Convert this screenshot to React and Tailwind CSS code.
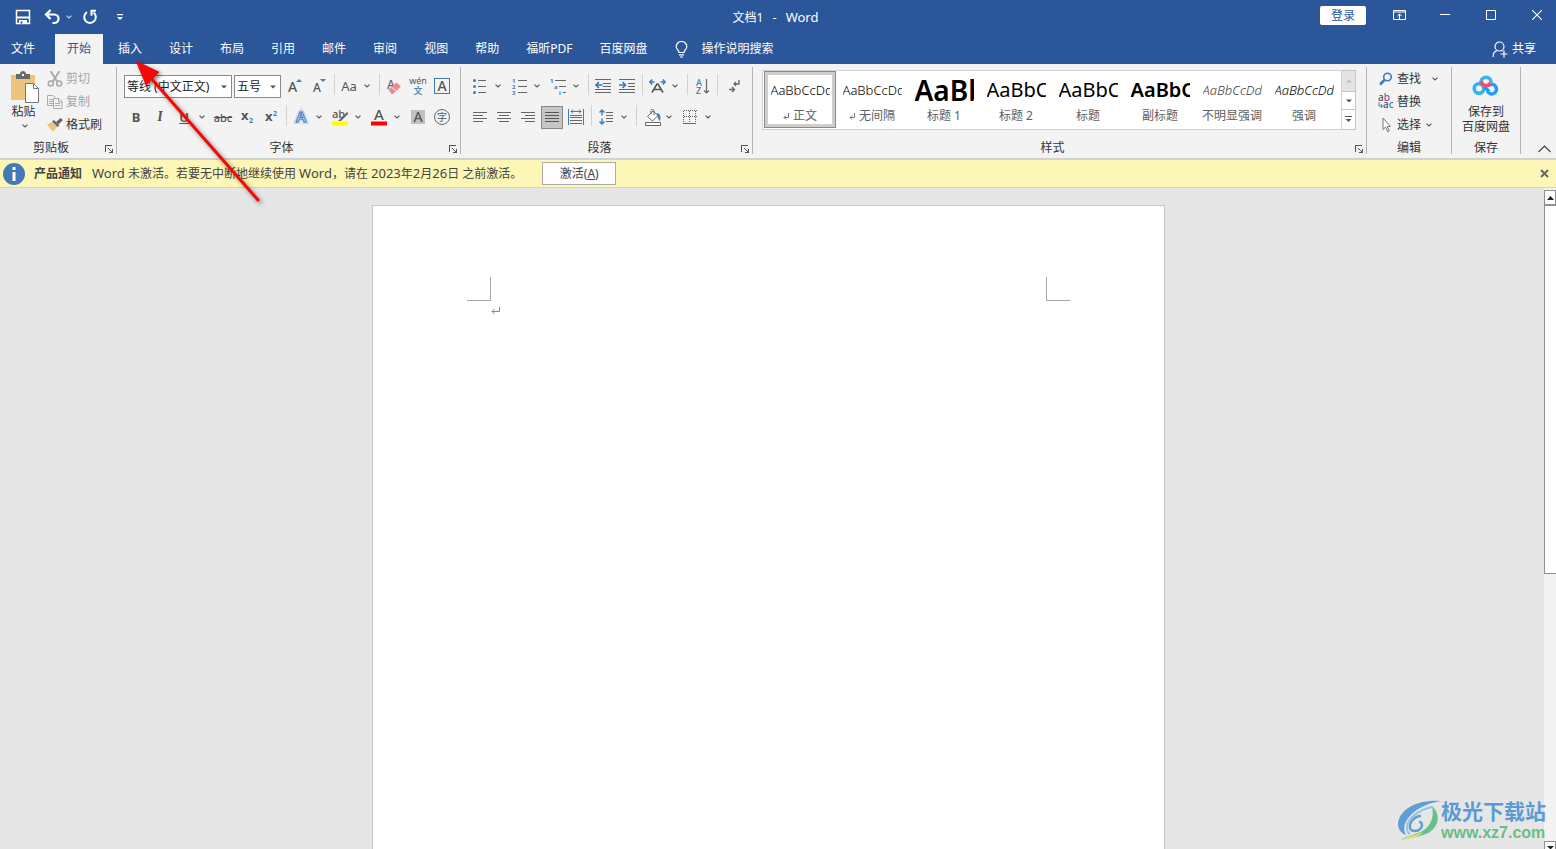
import { useState } from "react";

const BLUE = "#3f7ab6";
const GRAY = "#666666";

const tabs = ["开始", "插入", "设计", "布局", "引用", "邮件", "审阅", "视图", "帮助", "福昕PDF", "百度网盘"];

const styleItems = [
  { name: "正文", mark: true, sample: "AaBbCcDd", cls: "text-[13px] font-light text-black" },
  { name: "无间隔", mark: true, sample: "AaBbCcDd", cls: "text-[13px] font-light text-black" },
  { name: "标题 1", sample: "AaBb", cls: "text-[28px] font-semibold text-black" },
  { name: "标题 2", sample: "AaBbCc", cls: "text-[20px] text-black" },
  { name: "标题", sample: "AaBbCc", cls: "text-[20px] text-black" },
  { name: "副标题", sample: "AaBbCc", cls: "text-[20px] font-semibold text-black" },
  { name: "不明显强调", sample: "AaBbCcDd", cls: "text-[13px] font-light italic text-[#404040]" },
  { name: "强调", sample: "AaBbCcDd", cls: "text-[13px] font-light italic text-black" },
];

/* ---------- small building blocks ---------- */

function Chevron({ color = "#555" }) {
  return (
    <svg width="6" height="4" viewBox="0 0 6 4" fill="none" stroke={color} strokeWidth="1.1">
      <path d="M.5 .7 3 3 5.500 .7" />
    </svg>
  );
}

function Triangle({ color = "#555" }) {
  return (
    <svg width="6" height="4" viewBox="0 0 6 4" fill={color}>
      <path d="M0 .5h6L3 3.500z" />
    </svg>
  );
}

function Btn({ label, className = "", children }) {
  return (
    <button
      aria-label={label}
      className={`flex h-6 w-6 shrink-0 items-center justify-center leading-none ${className}`}
    >
      {children}
    </button>
  );
}

function Drop({ label }) {
  return (
    <button aria-label={label} className="flex h-6 w-[15px] shrink-0 items-center justify-center pr-[3px]">
      <Chevron />
    </button>
  );
}

function Sep() {
  return (
    <span className="flex h-6 w-[6px] shrink-0 justify-center">
      <span className="h-[21px] w-px bg-[#d2d2d2]" />
    </span>
  );
}

function Group({ title, launcher, className = "", children }) {
  return (
    <section className={`flex flex-col border-r border-[#b5b5b5] ${className}`}>
      <div className="h-[71px] shrink-0">{children}</div>
      <div className="flex h-4 shrink-0 items-center">
        <span className="flex-1 pt-[3px] text-center leading-4">{title}</span>
        {launcher && (
          <button aria-label={`${title}设置`} className="flex w-[14px] justify-center pt-[6px]">
            <svg width="8" height="8" viewBox="0 0 8 8" fill="none" stroke="#555" shapeRendering="crispEdges">
              <path d="M.5 7V.5H7M3 3l4 4M7.500 3.500v4h-4" />
            </svg>
          </button>
        )}
      </div>
    </section>
  );
}

function Combo({ label, value, className }) {
  return (
    <span className={`relative flex h-[23px] shrink-0 border border-[#8a8a8a] bg-white ${className}`}>
      <select aria-label={label} className="w-full appearance-none bg-white pl-[2px] pt-px text-xs text-[#222] outline-none">
        <option>{value}</option>
      </select>
      <span className="pointer-events-none absolute right-1 top-[9px]">
        <Triangle />
      </span>
    </span>
  );
}

function Lines({ rows, color = GRAY }) {
  return (
    <svg width="16" height="12" viewBox="0 0 16 12" stroke={color} shapeRendering="crispEdges">
      {rows.map(([x1, x2], i) => (
        <path key={i} d={`M${x1} ${i * 3 + 1.5}H${x2}`} />
      ))}
    </svg>
  );
}

/* ---------- title bar and tabs ---------- */

function TitleBar() {
  return (
    <header className="flex h-[34px] bg-[#2b579a] text-white">
      <div className="flex flex-1 items-center pl-[15px]">
        <button aria-label="保存">
          <svg width="16" height="16" viewBox="0 0 16 16" fill="none" stroke="#fff" strokeWidth="1.500">
            <path d="M1.500 1.500h13v13h-13z" />
            <path d="M1.500 8.500h13" strokeWidth="2" />
            <path d="M4 15v-4h8v4z" fill="#fff" stroke="none" />
            <path d="M5.500 12.500h2v2h-2z" fill="#2b579a" stroke="none" />
          </svg>
        </button>
        <button aria-label="撤消" className="ml-[13px]">
          <svg width="16" height="16" viewBox="0 0 16 16" fill="none" stroke="#fff" strokeWidth="2.200">
            <path d="M6.500 1 2 5.500 6.500 10M2.500 5.500H10c6 0 6 8.500 0 8.500H8.500" />
          </svg>
        </button>
        <button aria-label="撤消选项" className="ml-[6px]">
          <Chevron color="#c9d6ea" />
        </button>
        <button aria-label="重复" className="ml-[10px]">
          <svg width="16" height="16" viewBox="0 0 16 16" fill="none" stroke="#fff" strokeWidth="2">
            <path d="M5 3.200A5.800 5.800 0 1 0 11.500 3.500" />
            <path d="M14 1.800H9.500v5" />
          </svg>
        </button>
        <button aria-label="自定义快速访问工具栏" className="ml-[19px]">
          <svg width="6" height="7" viewBox="0 0 6 7" fill="#fff">
            <path d="M0 0h6v1.200H0zM0 3h6L3 6z" />
          </svg>
        </button>
      </div>
      <h1 className="pr-5 pt-[9px] text-[13px] leading-4">
        <span className="text-xs">文档1</span>
        <span className="mx-[9px]">-</span>
        <span>Word</span>
      </h1>
      <div className="flex flex-1 items-start justify-end gap-2">
        <button className="mt-[6px] mr-[6px] h-[19px] w-[46px] rounded-xs bg-white text-xs leading-5 text-[#2b579a]">
          登录
        </button>
        <button aria-label="功能区显示选项" className="flex h-[30px] w-[38px] items-center justify-center">
          <svg width="13" height="10" viewBox="0 0 13 10" fill="none" stroke="#fff">
            <path d="M.5 .5h12v9H.5zM.5 2h12M6.500 9V4M4.300 6.200 6.500 4l2.200 2.200" />
          </svg>
        </button>
        <button aria-label="最小化" className="flex h-[29px] w-[38px] items-center justify-center">
          <span className="h-px w-[10px] bg-white" />
        </button>
        <button aria-label="最大化" className="flex h-[30px] w-[38px] items-center justify-center">
          <span className="h-[10px] w-[10px] border border-white" />
        </button>
        <button aria-label="关闭" className="flex h-[30px] w-[38px] items-center justify-center">
          <svg width="10" height="10" viewBox="0 0 10 10" stroke="#fff" strokeWidth="1.100">
            <path d="M0 0l10 10M10 0L0 10" />
          </svg>
        </button>
      </div>
    </header>
  );
}

function TabBar({ active, setActive }) {
  return (
    <nav className="flex h-[30px] bg-[#2b579a] text-white">
      <button className="mr-[9px] px-[11px]">文件</button>
      <div className="flex gap-[3px]">
        {tabs.map((t) => (
          <button
            key={t}
            onClick={() => setActive(t)}
            className={`px-3 ${active === t ? "bg-[#f3f3f3] text-[#2b579a]" : ""}`}
          >
            {t}
          </button>
        ))}
      </div>
      <button className="ml-4 flex items-center gap-[13px]">
        <svg width="13" height="17" viewBox="0 0 13 17" fill="none" stroke="#fff" strokeWidth="1.200">
          <path d="M4 11.500C4 9 1.200 8.500 1.200 5.500a5.300 5 0 0 1 10.600 0c0 3-2.800 3.500-2.800 6zM4 13.800h5M5 16h3" />
        </svg>
        操作说明搜索
      </button>
      <button className="ml-auto flex items-center gap-1 pr-5">
        <svg width="16" height="17" viewBox="0 0 16 17" fill="none" stroke="#fff" strokeWidth="1.200">
          <circle cx="7.500" cy="5.500" r="4.500" />
          <path d="M1 16c0-3.500 2-6 4.500-6.500M9.500 9.500l1 .7M12 9.500v7M8.500 13H15.500" />
        </svg>
        共享
      </button>
    </nav>
  );
}

/* ---------- ribbon groups ---------- */

function ClipboardGroup() {
  return (
    <Group title="剪贴板" launcher className="w-[117px]">
      <div className="flex">
        <button className="flex w-[47px] flex-col items-center pt-1">
          <svg width="30" height="33" viewBox="0 0 30 33" className="ml-[3px]">
            <path d="M1 4h24v25H1z" fill="#ecc47c" />
            <path d="M6 3h4c0-4 6-4 6 0h4v5H6z" fill="#6a6a6a" />
            <path d="M12 3h2v2h-2z" fill="#fff" />
            <path d="M15.500 12.500h8l5 5v14h-13z" fill="#fff" stroke="#777" />
            <path d="M23.500 12.500v5h5" fill="none" stroke="#777" />
          </svg>
          <span className="leading-4">粘贴</span>
          <span className="flex h-3 items-center pl-[3px]">
            <Chevron />
          </span>
        </button>
        <div className="flex flex-col">
          <button className="flex h-[23px] items-center gap-[3px] text-[#a6a6a6]">
            <svg width="16" height="16" viewBox="0 0 16 16" fill="none" stroke="#ababab" strokeWidth="1.600">
              <path d="M3.500 0 10.500 11M12.500 0 5.500 11" strokeWidth="2" />
              <circle cx="3.800" cy="12.500" r="2.500" />
              <circle cx="12.200" cy="12.500" r="2.500" />
            </svg>
            剪切
          </button>
          <button className="flex h-[23px] items-center gap-[3px] text-[#a6a6a6]">
            <svg width="16" height="14" viewBox="0 0 16 14" fill="#f3f3f3" stroke="#ababab">
              <path d="M.5 .5H6l3 3v7H.5zM2 4.500h4M2 6.500h4M2 8.500h4" />
              <path d="M6.500 3.500H12l3 3v7H6.500zM8 8.500h5M8 10.500h5M11.500 4v3H15" />
            </svg>
            复制
          </button>
          <button className="flex h-[23px] items-center gap-[3px]">
            <svg width="16" height="14" viewBox="0 0 16 14">
              <path d="M0 6.500 5 4l5 5-4 5z" fill="#ecc47c" />
              <path d="M5 3.500 7 2l5.500 5.500-2 1.500z" fill="#666" />
              <path d="M9 4 13.500 0 16 2l-4.500 4.500z" fill="#666" />
            </svg>
            格式刷
          </button>
        </div>
      </div>
    </Group>
  );
}

function FontGroup() {
  return (
    <Group title="字体" launcher className="w-[344px]">
      <div className="flex flex-col gap-[7px] pl-[7px] pt-[7px] font-semibold text-[#555]">
        <div className="flex items-center font-normal">
          <Combo label="字体" value="等线 (中文正文)" className="mr-[2px] w-[108px]" />
          <Combo label="字号" value="五号" className="mr-[2px] w-[47px]" />
          <Btn label="增大字号">
            <svg width="16" height="16" viewBox="0 0 16 16" className="overflow-visible">
              <text x="1" y="14" fontSize="14" fontWeight="500" fill="#555">A</text>
              <path d="M9 4h6l-3-3z" fill={BLUE} />
            </svg>
          </Btn>
          <Btn label="减小字号">
            <svg width="16" height="16" viewBox="0 0 16 16" className="overflow-visible">
              <text x="2" y="14" fontSize="12" fontWeight="500" fill="#555">A</text>
              <path d="M9 1h6l-3 3z" fill={BLUE} />
            </svg>
          </Btn>
          <Sep />
          <Btn label="更改大小写" className="text-[13px]">Aa</Btn>
          <Drop label="大小写选项" />
          <Sep />
          <Btn label="清除所有格式">
            <svg width="16" height="17" viewBox="0 0 16 17" className="overflow-visible">
              <text x="1" y="11" fontSize="12" fontWeight="500" fill="#666">A</text>
              <path d="M2.500 11.500 10.500 4.500l4.500 4-8 7.500H5.500z" fill="#e98a99" />
              <path d="M5.500 9l4.500 4" stroke="#f3f3f3" />
            </svg>
          </Btn>
          <Btn label="拼音指南">
            <svg width="18" height="18" viewBox="0 0 18 18" textAnchor="middle" className="overflow-visible">
              <text x="9" y="7" fontSize="9" fill="#555">wén</text>
              <text x="9" y="17" fontSize="9" fontWeight="500" fill={BLUE}>文</text>
            </svg>
          </Btn>
          <Btn label="字符边框">
            <span className="flex h-4 w-4 items-center justify-center border border-[#3f7ab6] text-[14px] font-medium">A</span>
          </Btn>
        </div>
        <div className="flex items-center">
          <Btn label="加粗" className="text-[13px] font-bold">B</Btn>
          <Btn label="倾斜" className="font-serif text-[14px] italic">I</Btn>
          <Btn label="下划线" className="text-[13px] underline">U</Btn>
          <Drop label="下划线选项" />
          <Btn label="删除线" className="text-[11px] font-medium line-through">abc</Btn>
          <Btn label="下标">
            <svg width="14" height="14" viewBox="0 0 14 14" fontWeight="700" className="overflow-visible">
              <text x="1" y="10" fontSize="13" fill="#555">x</text>
              <text x="9" y="13" fontSize="7" fill={BLUE}>2</text>
            </svg>
          </Btn>
          <Btn label="上标">
            <svg width="14" height="14" viewBox="0 0 14 14" fontWeight="700" className="overflow-visible">
              <text x="1" y="11" fontSize="13" fill="#555">x</text>
              <text x="9" y="6" fontSize="7" fill={BLUE}>2</text>
            </svg>
          </Btn>
          <Sep />
          <Btn label="文本效果">
            <svg width="16" height="16" viewBox="0 0 16 16" className="overflow-visible">
              <text x="3" y="13" fontSize="15" fontWeight="600" fill="#fff" stroke="#c3daf2" strokeWidth="4">A</text>
              <text x="3" y="13" fontSize="15" fontWeight="600" fill="#fff" stroke={BLUE}>A</text>
            </svg>
          </Btn>
          <Drop label="文本效果选项" />
          <Btn label="突出显示">
            <svg width="17" height="17" viewBox="0 0 17 17" className="overflow-visible">
              <text x="0" y="9" fontSize="11" fontWeight="500" fill="#555">ab</text>
              <path d="M6 12 15 3l1.500 1.500L9 12z" fill="#666" />
              <path d="M0 12.500h16v4H0z" fill="#ffff00" />
            </svg>
          </Btn>
          <Drop label="突出显示颜色" />
          <Btn label="字体颜色">
            <svg width="16" height="17" viewBox="0 0 16 17" className="overflow-visible">
              <text x="3" y="11" fontSize="15" fontWeight="500" fill="#555">A</text>
              <path d="M0 12.500h16v4H0z" fill="#ff0000" />
            </svg>
          </Btn>
          <Drop label="字体颜色选项" />
          <Btn label="字符底纹">
            <span className="flex h-[14px] w-[14px] items-center justify-center bg-[#c0c0c0] text-[14px] font-medium">A</span>
          </Btn>
          <Btn label="带圈字符">
            <span className="flex h-4 w-4 items-center justify-center rounded-full border border-[#666] text-[10px] font-normal">字</span>
          </Btn>
        </div>
      </div>
    </Group>
  );
}

function ParagraphGroup() {
  return (
    <Group title="段落" launcher className="w-[292px]">
      <div className="flex flex-col gap-[7px] pl-[7px] pt-[7px]">
        <div className="flex items-center">
          <Btn label="项目符号">
            <svg width="14" height="16" viewBox="0 0 14 16" fill={BLUE} stroke={GRAY}>
              <path d="M5 2.500h8M5 8.500h8M5 14.500h8" />
              <g stroke="none">
                <circle cx="1.500" cy="2.500" r="1.500" />
                <circle cx="1.500" cy="8.500" r="1.500" />
                <circle cx="1.500" cy="14.500" r="1.500" />
              </g>
            </svg>
          </Btn>
          <Drop label="项目符号选项" />
          <Btn label="编号">
            <svg width="15" height="17" viewBox="0 0 15 17" fontSize="6" fontWeight="700" fill={BLUE} className="overflow-visible">
              <text x="0" y="5">1</text>
              <text x="0" y="11">2</text>
              <text x="0" y="17">3</text>
              <path d="M6 2.500h9M6 8.500h9M6 14.500h9" stroke={GRAY} />
            </svg>
          </Btn>
          <Drop label="编号选项" />
          <Btn label="多级列表">
            <svg width="17" height="17" viewBox="0 0 17 17" fontSize="6" fontWeight="700" fill={BLUE} className="overflow-visible">
              <text x="0" y="5">1</text>
              <text x="4" y="11">a</text>
              <text x="9" y="17">i</text>
              <path d="M5 2.500h11M9 8.500h7M13 14.500h3" stroke={GRAY} />
            </svg>
          </Btn>
          <Drop label="多级列表选项" />
          <Sep />
          <Btn label="减少缩进量">
            <svg width="16" height="14" viewBox="0 0 16 14" fill="none" stroke={GRAY}>
              <path d="M0 .5h16M8 4.500h8M8 7.500h8M0 10.500h16M0 13.500h16" shapeRendering="crispEdges" />
              <path d="M7.500 6H1M4 3 1 6l3 3" stroke={BLUE} strokeWidth="1.700" />
            </svg>
          </Btn>
          <Btn label="增加缩进量">
            <svg width="16" height="14" viewBox="0 0 16 14" fill="none" stroke={GRAY}>
              <path d="M0 .5h16M9 4.500h7M9 7.500h7M0 10.500h16M0 13.500h16" shapeRendering="crispEdges" />
              <path d="M0 6h6.500M3.500 3l3 3-3 3" stroke={BLUE} strokeWidth="1.700" />
            </svg>
          </Btn>
          <Sep />
          <Btn label="中文版式">
            <svg width="17" height="14" viewBox="0 0 17 14" fill="none" stroke={BLUE} strokeWidth="1.500">
              <path d="M5.500 3H1M3.200 .5.800 3l2.400 2.500M11.500 3H16M13.800 .5 16.200 3l-2.400 2.500" />
              <path d="M3 13.500 8 5h1l5 8.500M5 10.500h7" stroke="#555" strokeWidth="1.600" />
            </svg>
          </Btn>
          <Drop label="中文版式选项" />
          <Sep />
          <Btn label="排序">
            <svg width="15" height="17" viewBox="0 0 15 17" fontSize="9" fontWeight="500" className="overflow-visible">
              <text x="1" y="8" fill={BLUE}>A</text>
              <text x="1" y="16" fill="#8a4fa8">Z</text>
              <path d="M11.500 1v14M9 12.500l2.500 2.500 2.500-2.500" fill="none" stroke={GRAY} strokeWidth="1.200" />
            </svg>
          </Btn>
          <Sep />
          <Btn label="显示编辑标记" className="pl-1">
            <svg width="11" height="13" viewBox="0 0 11 13" fill="none" stroke={GRAY} strokeWidth="1.300">
              <path d="M10 0v4H5M7 2 5 4l2 2M0 9.500h5.500M3 7l2.500 2.500L3 12" />
            </svg>
          </Btn>
        </div>
        <div className="flex items-center">
          <Btn label="左对齐"><Lines rows={[[1, 15], [1, 11], [1, 15], [1, 11]]} /></Btn>
          <Btn label="居中"><Lines rows={[[1, 15], [3, 13], [1, 15], [3, 13]]} /></Btn>
          <Btn label="右对齐"><Lines rows={[[1, 15], [5, 15], [1, 15], [5, 15]]} /></Btn>
          <Btn label="两端对齐">
            <span className="flex h-[23px] w-[22px] items-center justify-center border border-[#8a8a8a] bg-[#c6c6c6]">
              <Lines rows={[[1, 15], [1, 15], [1, 15], [1, 15]]} color="#555" />
            </span>
          </Btn>
          <Btn label="分散对齐">
            <svg width="16" height="16" viewBox="0 0 16 16" fill="none" stroke={BLUE}>
              <path d="M.5 0v16M15.500 0v16M3 2.500h10M5 .5l-2 2 2 2M11 .5l2 2-2 2" />
              <path d="M2 6.500h12M2 8.500h12M2 11.500h12M2 14.500h12" stroke={GRAY} shapeRendering="crispEdges" />
            </svg>
          </Btn>
          <Sep />
          <Btn label="行距">
            <svg width="15" height="16" viewBox="0 0 15 16" fill="none" stroke={BLUE} strokeWidth="1.400">
              <path d="M3 1v5.500M.5 3.500 3 1l2.500 2.500M3 9.500V15M.5 12.500 3 15l2.500-2.500" />
              <path d="M7 3.500h7M7 6.500h7M7 9.500h7M7 12.500h7" stroke={GRAY} strokeWidth="1" />
            </svg>
          </Btn>
          <Drop label="行距选项" />
          <Sep />
          <Btn label="底纹" className="pl-1">
            <svg width="17" height="17" viewBox="0 0 17 17" fill="none" stroke={GRAY}>
              <path d="M8 2 2.500 7.500 7.500 12l5.500-5.500zM6 5V1.500c0-1.500 3-1.500 3 0V6" fill="#fff" />
              <path d="M12 4c3.500 1 4 4 3 8-2-1-1.500-4-3-5z" fill={BLUE} stroke="none" />
              <path d="M.5 13.500h15v3H.5z" fill="#fff" />
            </svg>
          </Btn>
          <Drop label="底纹选项" />
          <Btn label="边框">
            <svg width="14" height="14" viewBox="0 0 14 14" fill="none" stroke={GRAY} shapeRendering="crispEdges">
              <path d="M.5 .5h13M.5 6.500h13M.5 .5v12M6.500 .5v12M12.500 .5v12" strokeDasharray="1 1" />
              <path d="M0 13.500h13" />
            </svg>
          </Btn>
          <Drop label="边框选项" />
        </div>
      </div>
    </Group>
  );
}

function StylesGroup() {
  const [picked, setPicked] = useState("正文");

  return (
    <Group title="样式" launcher className="min-w-0 flex-1">
      <div className="flex pl-[9px] pr-[10px] pt-[3px]">
        <div className="flex h-[60px] min-w-0 flex-1 overflow-hidden border border-[#d2d2d2] bg-white pl-px">
          {styleItems.map((s) => (
            <button
              key={s.name}
              onClick={() => setPicked(s.name)}
              className={`flex h-[57px] w-[72px] shrink-0 flex-col items-center border ${
                picked === s.name
                  ? "border-[#8a8a8a] ring-3 ring-inset ring-[#d0cecc]"
                  : "border-transparent"
              }`}
            >
              <span className={`h-9 w-[59px] overflow-hidden text-left whitespace-nowrap leading-9 ${s.cls}`}>
                {s.sample}
              </span>
              <span className="flex items-center gap-1 leading-4 whitespace-nowrap text-[#606060]">
                {s.mark && (
                  <svg width="6" height="7" viewBox="0 0 6 7" fill="none" stroke="#777">
                    <path d="M5.500 0v4.500H1M3 2.500l-2 2 2 2" />
                  </svg>
                )}
                {s.name}
              </span>
            </button>
          ))}
        </div>
        <div className="flex h-[60px] w-[14px] flex-col border-y border-r border-[#c6c6c6] bg-white">
          <button aria-label="上一行" className="flex h-5 items-center justify-center bg-[#e4e4e4]">
            <span className="rotate-180"><Triangle color="#bbb" /></span>
          </button>
          <button aria-label="下一行" className="flex h-[19px] items-center justify-center border-y border-[#c6c6c6]">
            <Triangle />
          </button>
          <button aria-label="其他" className="flex h-[19px] items-center justify-center">
            <svg width="7" height="7" viewBox="0 0 7 7" fill="#555">
              <path d="M0 0h7v1H0zM.5 3h6l-3 3z" />
            </svg>
          </button>
        </div>
      </div>
    </Group>
  );
}

function EditGroup() {
  return (
    <Group title="编辑" className="w-[85px]">
      <div className="flex flex-col pl-[11px]">
        <button className="flex h-[23px] items-center gap-[3px]">
          <svg width="16" height="14" viewBox="0 0 16 14" fill="none" stroke={BLUE}>
            <circle cx="9.500" cy="5" r="3.800" strokeWidth="1.600" />
            <path d="M6.500 8 2 12.500" strokeWidth="2.500" />
          </svg>
          查找
          <span className="ml-2"><Chevron /></span>
        </button>
        <button className="flex h-[23px] items-center gap-[3px]">
          <svg width="16" height="17" viewBox="0 0 16 17" fontSize="10" fontWeight="500" className="overflow-visible">
            <text x="0" y="8" fill="#555">a<tspan fill="#8a4fa8">b</tspan></text>
            <text x="5" y="15" fill="#555">a<tspan fill={BLUE}>c</tspan></text>
            <path d="M1 9v4h3M3 11l1.500 2L3 15" fill="none" stroke={BLUE} />
          </svg>
          替换
        </button>
        <button className="flex h-[23px] items-center gap-[3px]">
          <svg width="16" height="16" viewBox="0 0 16 16" fill="#fff" stroke="#777">
            <path d="M5 1v11.500l2.700-2.500 2 4.800 1.600-.8-2-4.500H12.500z" />
          </svg>
          选择
          <span className="ml-[2px]"><Chevron /></span>
        </button>
      </div>
    </Group>
  );
}

function CloudGroup() {
  return (
    <Group title="保存" className="w-[69px]">
      <button className="flex w-full flex-col items-center pt-[7px] leading-[15px]">
        <svg width="28" height="22" viewBox="0 0 28 22" fill="none" strokeWidth="3.500">
          <circle cx="7" cy="14.500" r="4.800" stroke="#29b6f6" />
          <path d="M15.500 17.500a4.800 4.800 0 1 0 1-6" stroke="#1e9bff" />
          <path d="M9.200 9.500a5 5 0 1 1 9.800-1" stroke="#35b5f2" />
          <path d="M11 11.500l6 6" stroke="#1e9bff" />
          <path d="M9.200 7a5 5 0 0 0 9.600 1.500" stroke="#f0506e" />
        </svg>
        <span className="mt-2">保存到</span>
        <span>百度网盘</span>
      </button>
    </Group>
  );
}

/* ---------- message bar ---------- */

function MessageBar({ onClose }) {
  return (
    <div className="flex h-[29px] shrink-0 items-center border-y border-[#d9d6a8] bg-[#fcf7b6] pl-[3px] pr-[7px] text-[#444]">
      <svg width="22" height="22" viewBox="0 0 22 22">
        <circle cx="11" cy="11" r="11" fill="#437ab5" />
        <path d="M9.500 4h3v3h-3zM9.500 9h3v9h-3z" fill="#fff" />
      </svg>
      <strong className="ml-[9px] font-bold">产品通知</strong>
      <span className="ml-[10px] whitespace-nowrap">
        <span className="text-[13px]">Word</span> 未激活。若要无中断地继续使用 <span className="text-[13px]">Word</span>，请在{" "}
        <span className="text-[13px]">2023</span>年<span className="text-[13px]">2</span>月
        <span className="text-[13px]">26</span>日 之前激活。
      </span>
      <button className="ml-5 h-[23px] w-[74px] border border-[#ababab] bg-[#fdfdfd]">
        激活(<u>A</u>)
      </button>
      <button aria-label="关闭消息" onClick={onClose} className="ml-auto">
        <svg width="9" height="9" viewBox="0 0 9 9" stroke="#666" strokeWidth="2">
          <path d="M1 1l7 7M8 1L1 8" />
        </svg>
      </button>
    </div>
  );
}

/* ---------- document area ---------- */

function ScrollBar() {
  return (
    <div className="flex w-3 flex-col overflow-hidden bg-[#f3f3f3] pt-[2px]">
      <button aria-label="向上滚动" className="flex h-[15px] shrink-0 items-center justify-center border border-[#8f8f8f] bg-white">
        <svg width="7" height="4" viewBox="0 0 7 4" fill="#222"><path d="M0 4h7L3.500 0z" /></svg>
      </button>
      <div className="h-[56%] border border-r-0 border-[#8f8f8f] bg-white" />
      <button aria-label="向下滚动" className="mt-auto flex h-2 shrink-0 items-end justify-center border border-b-0 border-[#8f8f8f] bg-white">
        <svg width="7" height="3" viewBox="0 0 7 3" fill="#222"><path d="M0 0h7L4 3H3z" /></svg>
      </button>
    </div>
  );
}

function DocumentArea() {
  return (
    <main className="relative flex min-h-0 flex-1 bg-[#e6e6e6]">
      <div className="flex flex-1 justify-center pr-[7px] pt-[17px]">
        <article className="w-[793px] border border-b-0 border-[#c8c8c8] bg-white px-[94px] pt-[71px]">
          <div className="flex justify-between">
            <span className="h-6 w-6 border-b border-r border-[#a6a6a6]" />
            <span className="h-6 w-6 border-b border-l border-[#a6a6a6]" />
          </div>
          <svg className="ml-6 mt-[6px]" width="9" height="8" viewBox="0 0 9 8" fill="none" stroke="#888">
            <path d="M8.500 0v4.500H1M3.500 2 1 4.500 3.500 7" />
          </svg>
        </article>
      </div>
      <ScrollBar />
      <div className="absolute bottom-[6px] right-[10px] flex items-center">
        <svg width="44" height="42" viewBox="0 0 44 42" fill="none">
          <path d="M44 1C23-1 2 8 1 24c0 5 3 9 8 11C5 28 8 20 16 13 24 6 33 3 44 1z" fill="#5f9fd6" />
          <path d="M35 7C22 10 10 18 10 28c0 3 1 5 3 6" stroke="#8cc4ea" strokeWidth="2" />
          <path d="M24 16c-6 0-12 6-11 12 1 4 8 4 11 0 2-3 1-6-2-6" stroke="#5f9fd6" strokeWidth="2.500" />
          <path d="M35 6c10 9 7 24-9 29-8 3-14 2-22 5 6-5 16-5 23-10 8-6 10-14 8-24z" fill="#68c089" />
          <path d="M4 40c4-4 12-4 22-8-4 6-13 7-22 8z" fill="#cfe07a" />
        </svg>
        <div className="flex flex-col">
          <span className="text-[21px] font-bold leading-6 text-[#5b9bd5]">极光下载站</span>
          <span className="font-['Liberation_Sans'] text-[16px] font-bold leading-5 text-[#66bf86]">www.xz7.com</span>
        </div>
      </div>
    </main>
  );
}

function PointerArrow() {
  return (
    <svg
      className="pointer-events-none absolute left-[130px] top-[56px] drop-shadow-[2px_2px_2px_rgba(0,0,0,0.5)]"
      width="140"
      height="155"
      viewBox="0 0 140 155"
    >
      <path d="M128 144 20 21" stroke="#fb0505" strokeWidth="3" strokeLinecap="round" />
      <path d="M6 5 29 16 23 22 16 29z" fill="#fb0505" stroke="#c00" strokeWidth=".5" />
    </svg>
  );
}

export default function App() {
  const [active, setActive] = useState("开始");
  const [showMessage, setShowMessage] = useState(true);

  return (
    <div className="relative flex h-screen flex-col overflow-hidden font-['Noto_Sans','Noto_Sans_CJK_SC',sans-serif] text-xs text-[#333]">
      <TitleBar />
      <TabBar active={active} setActive={setActive} />
      <div className="flex h-[95px] shrink-0 border-b border-[#d0d0d0] bg-[#f3f3f3] pb-1 pt-[3px]">
        <ClipboardGroup />
        <FontGroup />
        <ParagraphGroup />
        <StylesGroup />
        <EditGroup />
        <CloudGroup />
        <button aria-label="折叠功能区" className="flex w-[35px] items-end justify-end pb-[1px] pr-[5px]">
          <svg width="13" height="8" viewBox="0 0 13 8" fill="none" stroke="#444" strokeWidth="1.200">
            <path d="M.5 7 6.500 1l6 6" />
          </svg>
        </button>
      </div>
      {showMessage && <MessageBar onClose={() => setShowMessage(false)} />}
      <DocumentArea />
      <PointerArrow />
    </div>
  );
}
